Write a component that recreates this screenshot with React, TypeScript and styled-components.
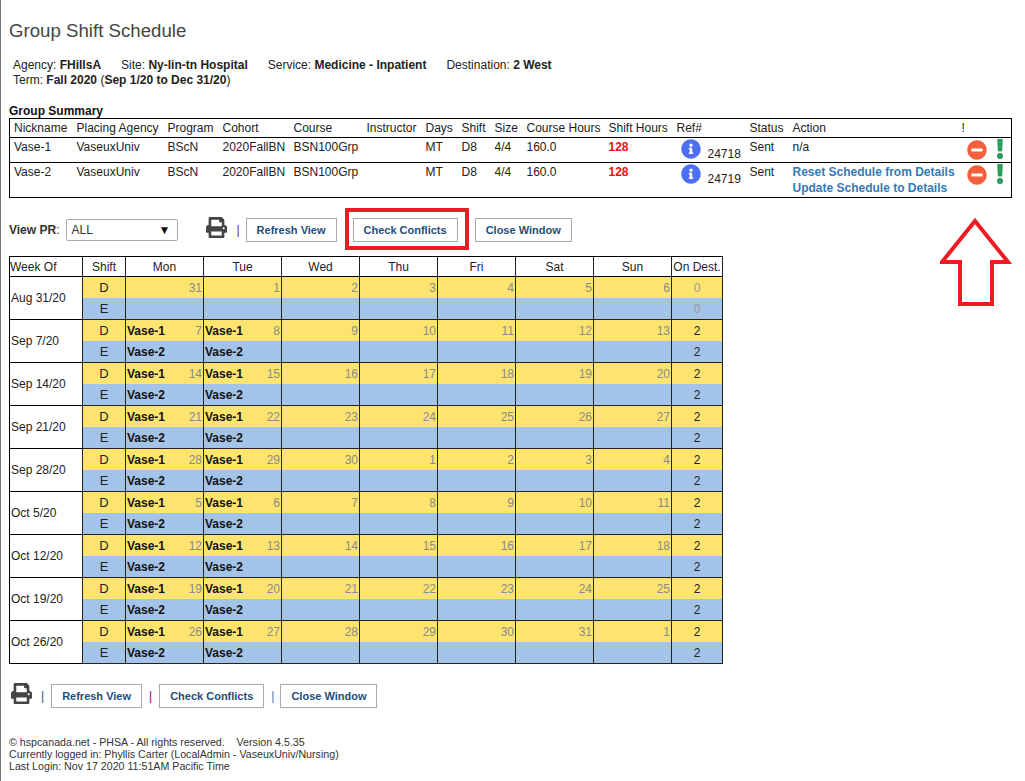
import React from 'react';
import styled, {createGlobalStyle} from 'styled-components';
import {FaPrint, FaInfoCircle, FaMinusCircle, FaExclamation} from 'react-icons/fa';

const GlobalStyle = createGlobalStyle`
	html, body {
		margin: 0;
		padding: 0;
		background: #fff;
	}
	body {
		font-family: "Liberation Sans", Arial, sans-serif;
		font-size: 12px;
		color: #222;
	}
`;

const Page = styled.div`
	position: relative;
	width: 1025px;
	height: 781px;
	box-sizing: border-box;
	border-left: 1px solid #777;
	padding: 20px 0 0 8px;
	overflow: hidden;
`;

const Title = styled.h1`
	margin: 0;
	font-size: 18.67px;
	line-height: 21px;
	font-weight: normal;
	color: #444;
`;

const InfoBlock = styled.div`
	margin: 17px 0 0 4px;
	line-height: 15px;
`;

const InfoRow = styled.div`
	display: flex;
	gap: 20px;
`;

const SectionLabel = styled.div`
	margin-top: 16px;
	font-weight: bold;
	line-height: 14px;
	color: #111;
`;

const SummaryTable = styled.table`
	border-collapse: collapse;
	table-layout: fixed;
	width: 1002px;
	border: 1px solid #000;
	margin-top: 0;

	th, td {
		padding: 1px 0 0 4px;
		font-weight: normal;
		text-align: left;
		vertical-align: top;
		white-space: nowrap;
		line-height: 16px;
		color: #222;
		overflow: visible;
	}
	thead tr { height: 19px; }
	tbody tr { border-top: 1px solid #000; height: 25px; }
	tbody tr:last-child { height: 35px; }
`;

const RedText = styled.span`
	color: #f01010;
	font-weight: bold;
`;

const ActionLink = styled.a`
	display: block;
	color: #337ab7;
	font-weight: bold;
`;

const RefCell = styled.div`
	display: flex;
	align-items: flex-start;
	gap: 7px;
	margin: 0 0 0 4px;
`;

const RefNumber = styled.span`
	margin-top: 7px;
`;

const InfoIcon = styled(FaInfoCircle)`
	width: 20px;
	height: 20px;
	color: #4d6ff2;
`;

const FlagCell = styled.div`
	display: flex;
	align-items: flex-start;
	gap: 5px;
`;

const MinusIcon = styled(FaMinusCircle)`
	width: 20px;
	height: 20px;
	margin-top: 1px;
	margin-left: 5px;
	color: #f4603c;
`;

const BangIcon = styled(FaExclamation)`
	width: 16px;
	height: 20px;
	color: #2e9e5f;
`;

const Toolbar = styled.div`
	display: flex;
	align-items: center;
	height: 24px;
	margin-top: 20px;
`;

const FieldLabel = styled.span`
	font-weight: bold;
	color: #333;
`;

const SelectBox = styled.div`
	display: flex;
	align-items: center;
	justify-content: space-between;
	box-sizing: border-box;
	width: 112px;
	height: 22px;
	margin-left: 7px;
	padding: 0 7px 0 4px;
	border: 1px solid #aaa;
	border-radius: 2px;
	color: #333;
`;

const SelectArrow = styled.span`
	color: #111;
`;

const PrintIcon = styled(FaPrint)`
	width: 21px;
	height: 21px;
	margin-top: -6px;
	margin-right: 2px;
	color: #444;
`;

const Bar = styled.span<{$color: string; $right?: number}>`
	color: ${p => p.$color};
	font-size: 12px;
	margin: 0 ${p => p.$right ?? 7}px 0 7px;
	line-height: 12px;
`;

const Spacer = styled.span<{$w: number}>`
	width: ${p => p.$w}px;
`;

const ActionButton = styled.button`
	box-sizing: border-box;
	height: 24px;
	padding: 0 10px;
	background: #fff;
	border: 1px solid #aaa;
	font-family: inherit;
	font-size: 11px;
	font-weight: bold;
	color: #1f4e79;
	white-space: nowrap;
`;

const Highlight = styled.div`
	position: absolute;
	left: 344px;
	top: 208px;
	width: 124px;
	height: 42px;
	box-sizing: border-box;
	border: 4px solid #ed1c24;
	pointer-events: none;
`;

const Arrow = styled.svg`
	position: absolute;
	left: 939px;
	top: 217px;
`;

const ScheduleTable = styled.table`
	margin-top: 14px;
	border-collapse: collapse;
	table-layout: fixed;
	width: 714px;
	border: 1px solid #000;

	th, td {
		padding: 0;
		border-right: 1px solid #222;
		line-height: 16px;
		font-weight: normal;
		text-align: center;
		color: #222;
		white-space: nowrap;
	}
	thead th {
		height: 19px;
		border-bottom: 1px solid #000;
	}
	thead th:first-child {
		text-align: left;
	}
`;

const WeekCell = styled.td`
	&& {
		text-align: left;
		padding-left: 1px;
		border-bottom: 1px solid #000;
		background: #fff;
	}
`;

const ShiftCell = styled.td<{$tone: 'D' | 'E'}>`
	height: 21px;
	background: ${p => (p.$tone === 'D' ? '#fde46f' : '#a3c4e8')};
	border-bottom: ${p => (p.$tone === 'E' ? '1px solid #222' : 'none')};
`;

const ShiftLetter = styled.span`
	font-size: 13px;
`;

const DayInner = styled.div`
	display: flex;
	justify-content: space-between;
	padding: 0 1px;
`;

const Nick = styled.span`
	font-weight: bold;
	color: #111;
`;

const DayNum = styled.span`
	color: #8a8a8a;
	margin-left: auto;
`;

const DestValue = styled.span<{$muted: boolean}>`
	color: ${p => (p.$muted ? '#9a9a9a' : '#222')};
`;

const BottomBar = styled.div`
	display: flex;
	align-items: center;
	height: 24px;
	margin: 20px 0 0 2px;
`;

const Footer = styled.div`
	margin-top: 28px;
	font-size: 10.67px;
	line-height: 12px;
	color: #333;
`;

const TableCol = styled.col<{$w: number}>`
	width: ${p => p.$w}px;
`;

const columns = [63, 91, 55, 71, 73, 59, 36, 33, 32, 82, 68, 73, 43, 169, 54];

const weeks = [
	{label: 'Aug 31/20', days: [31, 1, 2, 3, 4, 5, 6]},
	{label: 'Sep 7/20', days: [7, 8, 9, 10, 11, 12, 13]},
	{label: 'Sep 14/20', days: [14, 15, 16, 17, 18, 19, 20]},
	{label: 'Sep 21/20', days: [21, 22, 23, 24, 25, 26, 27]},
	{label: 'Sep 28/20', days: [28, 29, 30, 1, 2, 3, 4]},
	{label: 'Oct 5/20', days: [5, 6, 7, 8, 9, 10, 11]},
	{label: 'Oct 12/20', days: [12, 13, 14, 15, 16, 17, 18]},
	{label: 'Oct 19/20', days: [19, 20, 21, 22, 23, 24, 25]},
	{label: 'Oct 26/20', days: [26, 27, 28, 29, 30, 31, 1]},
];

const groups = [
	{nick: 'Vase-1', ref: '24718'},
	{nick: 'Vase-2', ref: '24719'},
];

const dayNames = ['Mon', 'Tue', 'Wed', 'Thu', 'Fri', 'Sat', 'Sun'];

const App = () => {
	return (
		<Page>
			<GlobalStyle />
			<Title>Group Shift Schedule</Title>
			<InfoBlock>
				<InfoRow>
					<span>Agency: <b>FHillsA</b></span>
					<span>Site: <b>Ny-lin-tn Hospital</b></span>
					<span>Service: <b>Medicine - Inpatient</b></span>
					<span>Destination: <b>2 West</b></span>
				</InfoRow>
				<div>Term: <b>Fall 2020</b> (<b>Sep 1/20 to Dec 31/20</b>)</div>
			</InfoBlock>

			<SectionLabel>Group Summary</SectionLabel>
			<SummaryTable>
				<colgroup>
					{columns.map((w, i) => <TableCol key={i} $w={w} />)}
				</colgroup>
				<thead>
					<tr>
						<th>Nickname</th><th>Placing Agency</th><th>Program</th><th>Cohort</th><th>Course</th>
						<th>Instructor</th><th>Days</th><th>Shift</th><th>Size</th><th>Course Hours</th>
						<th>Shift Hours</th><th>Ref#</th><th>Status</th><th>Action</th><th>!</th>
					</tr>
				</thead>
				<tbody>
					{groups.map((g, i) => (
						<tr key={g.nick}>
							<td>{g.nick}</td>
							<td>VaseuxUniv</td>
							<td>BScN</td>
							<td>2020FallBN</td>
							<td>BSN100Grp</td>
							<td></td>
							<td>MT</td>
							<td>D8</td>
							<td>4/4</td>
							<td>160.0</td>
							<td><RedText>128</RedText></td>
							<td>
								<RefCell>
									<InfoIcon />
									<RefNumber>{g.ref}</RefNumber>
								</RefCell>
							</td>
							<td>Sent</td>
							<td>
								{i === 0 ? 'n/a' : (
									<>
										<ActionLink>Reset Schedule from Details</ActionLink>
										<ActionLink>Update Schedule to Details</ActionLink>
									</>
								)}
							</td>
							<td>
								<FlagCell>
									<MinusIcon />
									<BangIcon />
								</FlagCell>
							</td>
						</tr>
					))}
				</tbody>
			</SummaryTable>

			<Toolbar>
				<FieldLabel>View PR</FieldLabel>:
				<SelectBox>ALL<SelectArrow>▼</SelectArrow></SelectBox>
				<Spacer $w={28} />
				<PrintIcon />
				<Bar $color="#444" $right={6}>|</Bar>
				<ActionButton>Refresh View</ActionButton>
				<Spacer $w={16} />
				<ActionButton>Check Conflicts</ActionButton>
				<Spacer $w={17} />
				<ActionButton>Close Window</ActionButton>
			</Toolbar>

			<ScheduleTable>
				<colgroup>
					<TableCol $w={73} />
					<TableCol $w={43} />
					{dayNames.map(d => <TableCol key={d} $w={78} />)}
					<TableCol $w={51} />
				</colgroup>
				<thead>
					<tr>
						<th>Week Of</th>
						<th>Shift</th>
						{dayNames.map(d => <th key={d}>{d}</th>)}
						<th>On Dest.</th>
					</tr>
				</thead>
				<tbody>
					{weeks.map((w, wi) => (
						<React.Fragment key={w.label}>
							<tr>
								<WeekCell rowSpan={2}>{w.label}</WeekCell>
								<ShiftCell $tone="D"><ShiftLetter>D</ShiftLetter></ShiftCell>
								{w.days.map((n, di) => (
									<ShiftCell $tone="D" key={di}>
										<DayInner>
											{wi > 0 && di < 2 && <Nick>Vase-1</Nick>}
											<DayNum>{n}</DayNum>
										</DayInner>
									</ShiftCell>
								))}
								<ShiftCell $tone="D"><DestValue $muted={wi === 0}>{wi === 0 ? 0 : 2}</DestValue></ShiftCell>
							</tr>
							<tr>
								<ShiftCell $tone="E"><ShiftLetter>E</ShiftLetter></ShiftCell>
								{w.days.map((n, di) => (
									<ShiftCell $tone="E" key={di}>
										<DayInner>
											{wi > 0 && di < 2 ? <Nick>Vase-2</Nick> : null}
										</DayInner>
									</ShiftCell>
								))}
								<ShiftCell $tone="E"><DestValue $muted={wi === 0}>{wi === 0 ? 0 : 2}</DestValue></ShiftCell>
							</tr>
						</React.Fragment>
					))}
				</tbody>
			</ScheduleTable>

			<BottomBar>
				<PrintIcon />
				<Bar $color="#1f4e79">|</Bar>
				<ActionButton>Refresh View</ActionButton>
				<Bar $color="#800080">|</Bar>
				<ActionButton>Check Conflicts</ActionButton>
				<Bar $color="#337ab7" $right={6}>|</Bar>
				<ActionButton>Close Window</ActionButton>
			</BottomBar>

			<Footer>
				<div>© hspcanada.net - PHSA - All rights reserved. &nbsp;&nbsp; Version 4.5.35</div>
				<div>Currently logged in: Phyllis Carter (LocalAdmin - VaseuxUniv/Nursing)</div>
				<div>Last Login: Nov 17 2020 11:51AM Pacific Time</div>
			</Footer>

			<Highlight />
			<Arrow width="72" height="92" viewBox="0 0 72 92">
				<path d="M35 4 L68 45 L52 45 L52 87 L20 87 L20 45 L2 45 Z" fill="none" stroke="#ed1c24" strokeWidth="4" />
			</Arrow>
		</Page>
	);
};

export default App;
